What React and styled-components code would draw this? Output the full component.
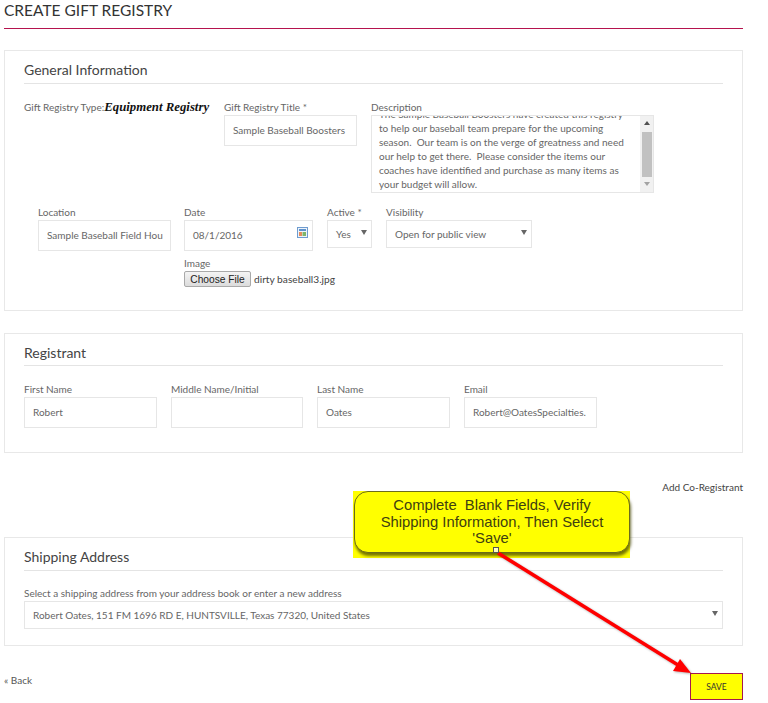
import React from "react";
import styled, { createGlobalStyle } from "styled-components";

const GlobalStyle = createGlobalStyle`
  html, body {
    margin: 0;
    padding: 0;
    background: #fff;
  }
  body {
    font-family: Lato, "Liberation Sans", sans-serif;
    color: #666;
    font-size: 11px;
  }
  * {
    box-sizing: border-box;
  }
`;

const Page = styled.div`
  position: relative;
  width: 768px;
  height: 703px;
  overflow: hidden;
  padding: 0 25px 0 4px;
`;

const PageTitle = styled.h1`
  margin: 0;
  height: 29px;
  padding-top: 1px;
  border-bottom: 1px solid #b5134e;
  font-size: 15.5px;
  line-height: 18px;
  font-weight: 400;
  color: #333;
`;

const Panel = styled.section`
  height: ${(p) => p.$height}px;
  margin-top: ${(p) => p.$top}px;
  padding: 9px 19px 0;
  border: 1px solid #e8e8e8;
`;

const PanelHeading = styled.h2`
  margin: 0 0 ${(p) => p.$gap || 17}px;
  height: ${(p) => p.$height || 24}px;
  border-bottom: 1px solid #e4e4e4;
  font-size: 14px;
  line-height: 19px;
  font-weight: 400;
  color: #444;
`;

const Row = styled.div`
  display: flex;
  align-items: flex-start;
  gap: 14px;
  margin-left: ${(p) => p.$indent || 0}px;
  margin-top: ${(p) => p.$top || 0}px;
`;

const Field = styled.div`
  display: flex;
  flex-direction: column;
  width: ${(p) => p.$width}px;
  flex: none;
`;

const LocationField = styled(Field)`
  margin-right: -1px;
`;

const Label = styled.label`
  display: block;
  font-size: 10px;
  line-height: 12px;
  height: 12px;
  margin-bottom: 2px;
  white-space: nowrap;
  color: #666;
`;

const TypeLabel = styled(Label)`
  width: 186px;
  margin: 0;
`;

const ImageLabel = styled(Label)`
  margin-top: 6px;
  margin-bottom: 2px;
`;

const TypeValue = styled.b`
  font-family: "Liberation Serif", serif;
  font-style: italic;
  font-size: 12.8px;
  color: #111;
`;

const TextBox = styled.div`
  height: ${(p) => p.$height || 31}px;
  padding: 0 8px;
  border: 1px solid #e6e6e6;
  font-size: 10px;
  line-height: ${(p) => (p.$height || 31) - 2}px;
  color: #666;
  overflow: hidden;
  white-space: nowrap;
  position: relative;
`;

const SelectBox = styled(TextBox)`
  padding-right: 20px;
  &::after {
    content: "";
    position: absolute;
    right: 4px;
    top: 50%;
    margin-top: -4px;
    border-left: 3px solid transparent;
    border-right: 3px solid transparent;
    border-top: 5px solid #666;
  }
`;

const CalendarIcon = styled.svg`
  position: absolute;
  right: 4px;
  top: 6px;
  width: 11px;
  height: 11px;
`;

const DescriptionBox = styled.div`
  display: flex;
  height: 78px;
  border: 1px solid #e6e6e6;
  overflow: hidden;
`;

const DescriptionText = styled.div`
  flex: 1;
  margin-top: -9px;
  padding: 0 8px 0 7px;
  font-size: 10px;
  line-height: 14px;
  color: #666;
  white-space: pre-wrap;
`;

const Scrollbar = styled.div`
  display: flex;
  flex-direction: column;
  align-items: center;
  width: 13px;
  background: #f1f1f1;
  padding-top: 5px;
`;

const ScrollThumb = styled.div`
  width: 10px;
  height: 45px;
  margin: 7px 0 5px;
  background: #c1c1c1;
`;

const ScrollArrow = styled.span`
  width: 0;
  height: 0;
  border-left: 3px solid transparent;
  border-right: 3px solid transparent;
  border-${(p) => (p.$up ? "bottom" : "top")}: 4px solid ${(p) => (p.$up ? "#505050" : "#a3a3a3")};
`;

const FileRow = styled.div`
  display: flex;
  align-items: center;
  gap: 3px;
  color: #444;
  font-size: 10.2px;
  white-space: nowrap;
`;

const ChooseButton = styled.button`
  width: 67px;
  height: 16px;
  flex: none;
  padding: 0;
  border: 1px solid #a9a9a9;
  border-radius: 2px;
  background: linear-gradient(#f4f4f4, #dcdcdc);
  font-family: "Liberation Sans", sans-serif;
  font-size: 10.2px;
  color: #222;
`;

const AddLink = styled.div`
  margin-top: 28px;
  height: 14px;
  text-align: right;
  font-size: 10px;
  line-height: 12px;
  color: #444;
`;

const Footer = styled.div`
  display: flex;
  justify-content: space-between;
  align-items: flex-start;
  margin-top: 27px;
`;

const BackLink = styled.a`
  font-size: 10px;
  line-height: 14px;
  color: #555;
`;

const SaveButton = styled.button`
  width: 53px;
  height: 27px;
  padding: 0;
  border: 1px solid #a6174f;
  background: #ffff00;
  font-family: Lato, sans-serif;
  font-size: 8.5px;
  color: #333;
`;

const CalloutFrame = styled.div`
  position: absolute;
  left: 353px;
  top: 491px;
  width: 277px;
  height: 67px;
  padding-left: 1px;
  background: #ffff00;
`;

const Callout = styled.div`
  height: 62px;
  padding: 5px 20px 0;
  background: #ffff00;
  border: 1px solid #6b6b1a;
  border-radius: 14px;
  box-shadow: 1px 3px 3px rgba(70, 70, 0, 0.75);
  font-family: "Liberation Sans", sans-serif;
  font-size: 14.8px;
  line-height: 16.5px;
  text-align: center;
  color: #404010;
  white-space: pre-wrap;
`;

const Handle = styled.div`
  position: absolute;
  left: 493px;
  top: 547px;
  width: 6px;
  height: 6px;
  background: #ffffc0;
  border: 1px solid #555;
`;

const ArrowOverlay = styled.svg`
  position: absolute;
  left: 0;
  top: 0;
  width: 768px;
  height: 703px;
  pointer-events: none;
  filter: drop-shadow(1px 1px 1px rgba(0, 0, 0, 0.3));
`;

export default function App() {
  return (
    <Page>
      <GlobalStyle />
      <PageTitle>CREATE GIFT REGISTRY</PageTitle>

      <Panel $top={21} $height={261}>
        <PanelHeading>General Information</PanelHeading>
        <Row>
          <TypeLabel>
            Gift Registry Type:<TypeValue>Equipment Registry</TypeValue>
          </TypeLabel>
          <Field $width={133}>
            <Label>Gift Registry Title *</Label>
            <TextBox>Sample Baseball Boosters</TextBox>
          </Field>
          <Field $width={283}>
            <Label>Description</Label>
            <DescriptionBox>
              <DescriptionText>
                {"The Sample Baseball Boosters have created this registry\nto help our baseball team prepare for the upcoming\nseason.  Our team is on the verge of greatness and need\nour help to get there.  Please consider the items our\ncoaches have identified and purchase as many items as\nyour budget will allow."}
              </DescriptionText>
              <Scrollbar>
                <ScrollArrow $up />
                <ScrollThumb />
                <ScrollArrow />
              </Scrollbar>
            </DescriptionBox>
          </Field>
        </Row>
        <Row $indent={14} $top={13}>
          <LocationField $width={133}>
            <Label>Location</Label>
            <TextBox>Sample Baseball Field Hou</TextBox>
          </LocationField>
          <Field $width={129}>
            <Label>Date</Label>
            <TextBox>
              08/1/2016
              <CalendarIcon viewBox="0 0 11 11">
                <rect x="0.5" y="0.5" width="10" height="10" fill="#eef4fb" stroke="#6f9ccf" />
                <rect x="2" y="2" width="7" height="2" fill="#5f93cc" />
                <rect x="2" y="5" width="3" height="4" fill="#e58a5a" />
                <rect x="5.5" y="5" width="3.5" height="4" fill="#7fb56a" />
              </CalendarIcon>
            </TextBox>
            <ImageLabel>Image</ImageLabel>
            <FileRow>
              <ChooseButton>Choose File</ChooseButton>
              dirty baseball3.jpg
            </FileRow>
          </Field>
          <Field $width={45}>
            <Label>Active *</Label>
            <SelectBox $height={28}>Yes</SelectBox>
          </Field>
          <Field $width={146}>
            <Label>Visibility</Label>
            <SelectBox $height={28}>Open for public view</SelectBox>
          </Field>
        </Row>
      </Panel>

      <Panel $top={22} $height={120}>
        <PanelHeading $height={23}>Registrant</PanelHeading>
        <Row>
          <Field $width={133}>
            <Label>First Name</Label>
            <TextBox>Robert</TextBox>
          </Field>
          <Field $width={132}>
            <Label>Middle Name/Initial</Label>
            <TextBox />
          </Field>
          <Field $width={133}>
            <Label>Last Name</Label>
            <TextBox>Oates</TextBox>
          </Field>
          <Field $width={133}>
            <Label>Email</Label>
            <TextBox>Robert@OatesSpecialties.</TextBox>
          </Field>
        </Row>
      </Panel>

      <AddLink>Add Co-Registrant</AddLink>

      <Panel $top={42} $height={109}>
        <PanelHeading $gap={16}>Shipping Address</PanelHeading>
        <Label>Select a shipping address from your address book or enter a new address</Label>
        <SelectBox $height={28}>Robert Oates, 151 FM 1696 RD E, HUNTSVILLE, Texas 77320, United States</SelectBox>
      </Panel>

      <Footer>
        <BackLink>« Back</BackLink>
        <SaveButton>SAVE</SaveButton>
      </Footer>

      <CalloutFrame>
        <Callout>Complete  Blank Fields, Verify Shipping Information, Then Select 'Save'</Callout>
      </CalloutFrame>
      <ArrowOverlay viewBox="0 0 768 703">
        <line x1="498" y1="553" x2="678" y2="665" stroke="#ff0000" strokeWidth="3.5" />
        <polygon points="691,673 673,671 680,659" fill="#ff0000" />
      </ArrowOverlay>
      <Handle />
    </Page>
  );
}
